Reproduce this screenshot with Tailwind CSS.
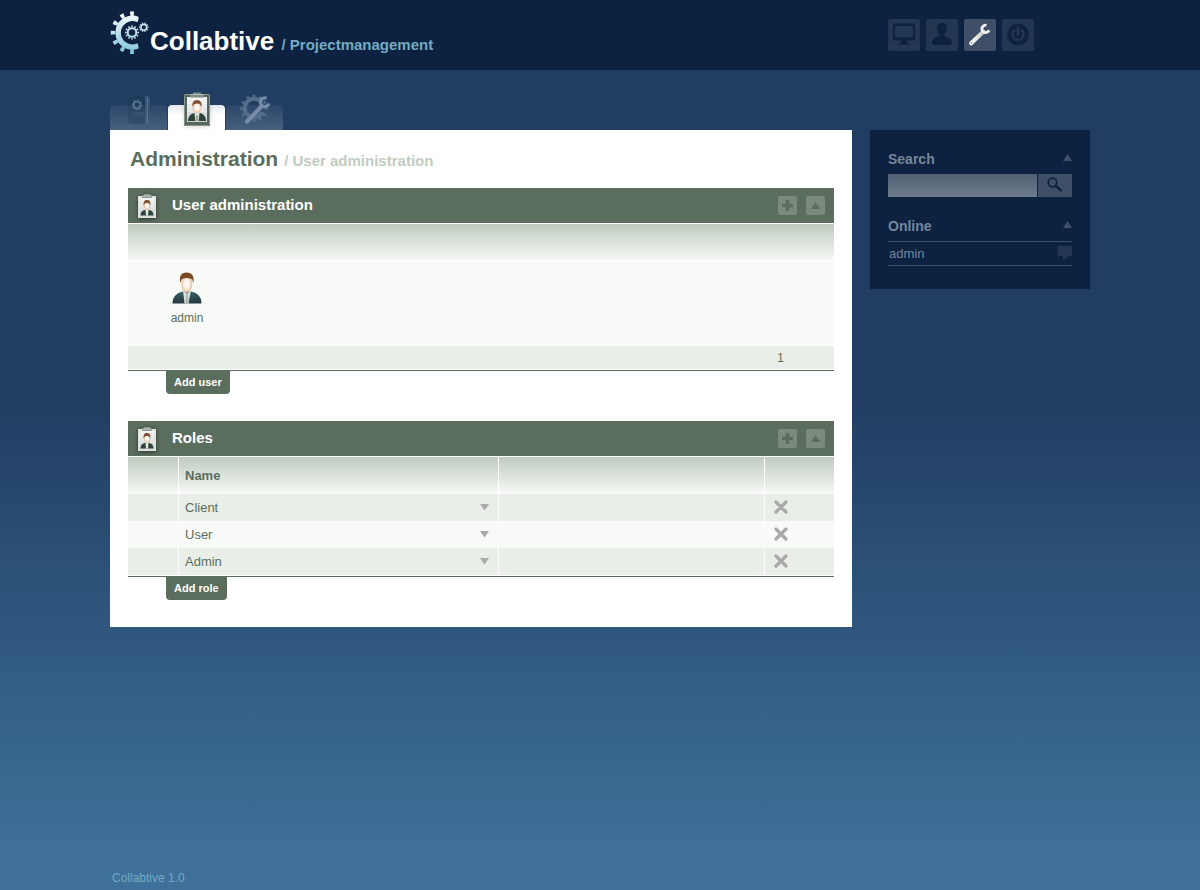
<!DOCTYPE html>
<html lang="en">
<head>
<meta charset="utf-8">
<meta name="viewport" content="width=device-width, initial-scale=1">
<title>Collabtive - User administration</title>
<script src="https://cdn.jsdelivr.net/npm/@tailwindcss/browser@4"></script>
</head>
<body class="flex min-h-screen flex-col bg-linear-to-b from-[#213e62] from-45% to-[#3e7099] to-95% font-['Liberation_Sans',Arial,sans-serif] text-[13px] text-[#5b6d5d]">

<svg class="absolute size-0" aria-hidden="true">
  <defs>
    <linearGradient id="ice" x1="0" y1="0" x2="0" y2="44" gradientUnits="userSpaceOnUse"><stop offset="0" stop-color="#fff"/><stop offset="1" stop-color="#7cc3d9"/></linearGradient>
    <radialGradient id="skin"><stop offset="0" stop-color="#fff"/><stop offset=".5" stop-color="#fbf1e8"/><stop offset="1" stop-color="#e3bd98"/></radialGradient>
    <linearGradient id="suit" x1="0" x2="0" y1="0" y2="1"><stop offset="0" stop-color="#3c6066"/><stop offset="1" stop-color="#22383f"/></linearGradient>
    <linearGradient id="paper" x1="0" x2="0" y1="0" y2="1"><stop offset="0" stop-color="#f4f5f5"/><stop offset="1" stop-color="#cfd3d4"/></linearGradient>
    <linearGradient id="steel" x1="0" x2="1"><stop offset="0" stop-color="#fff"/><stop offset="1" stop-color="#c8c8c8"/></linearGradient>
  </defs>
  <symbol id="clipboard" viewBox="0 0 28 36">
    <rect x="1" y="3" width="26" height="32" rx="1" fill="#56665a"/>
    <rect x="1.500" y="3.500" width="25" height="31" rx="1" fill="none" stroke="#89968c"/>
    <rect x="4" y="6" width="20" height="25" fill="url(#paper)"/>
    <path d="M4 12h20M4 16h20M4 20h20" stroke="#fff" stroke-opacity=".6"/>
    <path d="M5 30c0-4 2-7 6-8h6c4 1 6 4 6 8z" fill="#2f4439"/>
    <path d="M11.500 22h5l-.8 8h-3.400z" fill="#e4e7e4"/>
    <path d="M13 24h2l.6 6h-3.200z" fill="#9aaaa0"/>
    <ellipse cx="14" cy="16.500" rx="4.300" ry="5.800" fill="url(#skin)"/>
    <path d="M9.600 16c-.8-4 .8-7 4.400-7s5.200 3 4.400 7c-.7-2.500-1.800-3.500-4.400-3.500S10.300 13.500 9.600 16z" fill="#80502e"/>
    <path d="M7 3h3V1.500h8V3h3v3.500H7z" fill="#7f8c83"/>
    <path d="M7.500 3.500h13" stroke="#b8c1ba"/>
  </symbol>
  <symbol id="clipboard-light" viewBox="0 0 20 26">
    <rect x="1" y="3" width="18" height="22" fill="#dfe4e0"/>
    <rect x="2.500" y="5" width="15" height="18.500" fill="url(#paper)"/>
    <path d="M3.500 22.500c0-3 1.500-5 4-5.500h5c2.500.5 4 2.500 4 5.500z" fill="#2f4439"/>
    <path d="M8.500 17h3l-.4 5.500H9z" fill="#e4e7e4"/>
    <ellipse cx="10" cy="12.500" rx="3" ry="4.300" fill="url(#skin)"/>
    <path d="M6.700 12.500c-.6-3.500.7-5.500 3.300-5.500s3.900 2 3.300 5.500c-.7-2-1.500-2.500-3.300-2.500s-2.600.5-3.300 2.500z" fill="#80502e"/>
    <path d="M5 2.500h2V1h6v1.500h2V5H5z" fill="#8d9b90"/>
    <path d="M5.500 3h9" stroke="#c5cec7"/>
  </symbol>
  <symbol id="plus" viewBox="0 0 19 19"><path d="M9.500 4v11M4 9.500h11" stroke="#5b6d5d" stroke-width="3.400"/></symbol>
  <symbol id="up" viewBox="0 0 9 7"><path d="M4.500 0L9 7H0z" fill="currentColor"/></symbol>
  <symbol id="down" viewBox="0 0 9 7"><path d="M0 0h9L4.500 6.500z" fill="#a9a9a9"/></symbol>
  <symbol id="cross" viewBox="0 0 14 14"><path d="M2 2l10 10M12 2L2 12" stroke="#a9a9a9" stroke-width="3.200" stroke-linecap="round"/></symbol>
</svg>

<header class="h-[70px] bg-[#0d2240]">
  <div class="mx-auto flex h-full max-w-[980px] items-start justify-between">
    <h1 class="flex pt-[11px] font-bold">
      <svg class="h-11 w-10 shrink-0" viewBox="0 0 40 44" fill="none" stroke="url(#ice)" aria-hidden="true">
        <clipPath id="left"><path d="M0 0h28.500v44H0z"/></clipPath>
        <g clip-path="url(#left)">
          <path d="M28.500 8.800A14.300 14.300 0 1 0 28.500 34.700" stroke-width="5.500"/>
          <circle cx="22" cy="21.700" r="19" stroke-width="4.600" pathLength="120" stroke-dasharray="3.800 6.200" stroke-dashoffset="1.900"/>
        </g>
        <circle cx="22" cy="21.500" r="4.300" stroke-width="2"/>
        <circle cx="22" cy="21.500" r="6.100" stroke-width="1.800" pathLength="120" stroke-dasharray="5 5" stroke-dashoffset="2.500"/>
        <circle cx="33.800" cy="16.300" r="2.900" stroke-width="1.500"/>
        <circle cx="33.800" cy="16.300" r="4.100" stroke-width="1.300" pathLength="100" stroke-dasharray="5 5" stroke-dashoffset="2.500"/>
      </svg>
      <span class="pt-[15px] text-[26px] leading-[30px] text-white">Collabtive <span class="text-[15px] text-[#74abc3]">/ Projectmanagement</span></span>
    </h1>
    <nav class="mr-14 flex gap-1.5 pt-[19px]" aria-label="Main">
      <a href="#" aria-label="Desktop" class="size-8 rounded-xs bg-[#243752]">
        <svg class="size-8" viewBox="0 0 32 32"><path d="M5 4.500h22v17h-8v2l3 2.500H10l3-2.500v-2H5z" fill="#0d2240"/><path d="M7 7h18v11.500H7z" fill="#243752"/></svg></a>
      <a href="#" aria-label="My account" class="size-8 rounded-xs bg-[#243752]">
        <svg class="size-8" viewBox="0 0 32 32"><path d="M16 4c3.200 0 4.800 2.200 4.800 5.300 0 2.400-.9 4.200-2.300 5.700v2c4 1 7.500 3 7.500 7 0 1.500-1.500 2-3 2H9c-1.500 0-3-.5-3-2 0-4 3.500-6 7.500-7v-2c-1.400-1.500-2.300-3.300-2.300-5.700C11.200 6.200 12.800 4 16 4z" fill="#0d2240"/></svg></a>
      <a href="#" aria-label="Administration" class="size-8 rounded-xs bg-[#3e4f67]">
        <svg class="size-8" viewBox="0 0 32 32" fill="none"><path d="M7.200 24.300L19.500 12.500" stroke="url(#steel)" stroke-width="4" stroke-linecap="round"/><path d="M22.500 6.300a3.700 3.700 0 1 0 2.500 5" stroke="#f0f0f0" stroke-width="2.900"/><circle cx="7.500" cy="24" r=".8" fill="#56647a"/></svg></a>
      <a href="#" aria-label="Logout" class="size-8 rounded-xs bg-[#243752]">
        <svg class="size-8" viewBox="0 0 32 32" fill="none"><circle cx="16" cy="15.500" r="10.800" fill="#0d2240"/><path d="M12.300 11.200a5.600 5.600 0 1 0 7.400 0" stroke="#243752" stroke-width="2.400" stroke-linecap="round"/><path d="M16 8.500v7" stroke="#243752" stroke-width="2.600" stroke-linecap="round"/></svg></a>
    </nav>
  </div>
</header>

<div class="mx-auto flex w-full max-w-[980px] items-start gap-[18px]">
  <div class="min-w-0 flex-1">
    <nav class="flex h-[60px] items-end gap-px" aria-label="Administration sections">
      <a href="#" aria-label="Projects" class="flex h-[25px] w-[57px] items-end justify-center rounded-t-sm bg-linear-to-b from-[#2c476a] to-[#48607e]">
        <svg class="mb-1 h-8 w-8 shrink-0" viewBox="0 0 32 32"><path d="M5 4l3-2h16v28H8l-3-2z" fill="#1c3654" fill-opacity=".35"/><path d="M22 2h3l2 3v6l-2 2v17h-3z" fill="#718aa5" fill-opacity=".3"/><path d="M24.500 4v25" stroke="#6f88a3" stroke-opacity=".5"/><circle cx="14" cy="11" r="3.300" fill="none" stroke="#56708f" stroke-width="1.800"/><circle cx="14" cy="11" r="4.700" fill="none" stroke="#56708f" stroke-width="1.400" pathLength="80" stroke-dasharray="5 5"/><path d="M8 19h13M10 21h9" stroke="#3f5b7b"/></svg></a>
      <a href="#" aria-label="Users" aria-current="page" class="flex h-[25px] w-[57px] items-end justify-center rounded-t-sm bg-linear-to-b from-[#e4e7ef] to-white to-40%">
        <svg class="mb-[3px] h-9 w-7 shrink-0 drop-shadow-sm"><use href="#clipboard"/></svg></a>
      <a href="#" aria-label="System" class="flex h-[25px] w-[57px] items-end justify-center rounded-t-sm bg-linear-to-b from-[#2c476a] to-[#48607e]">
        <svg class="mb-1 h-8 w-8 shrink-0" viewBox="0 0 32 32" fill="none"><g stroke="#536d8c"><path d="M22.500 8.500A9.300 9.300 0 1 0 23.500 18" stroke-width="4"/><circle cx="15" cy="14.500" r="12.300" stroke-width="3" pathLength="120" stroke-dasharray="4 6" stroke-dashoffset="2"/></g><path d="M8 27.500L22.500 12.500" stroke="#758ca6" stroke-width="4.200" stroke-linecap="round"/><path d="M27.500 4.300a4.300 4.300 0 1 0 2.400 5" stroke="#758ca6" stroke-width="3.200"/></svg></a>
    </nav>

    <main class="bg-white px-[18px] pb-[27px]">
      <h2 class="flex h-[58px] items-baseline gap-1.5 pt-[17px] pl-0.5 text-[21px] leading-6 font-bold">Administration <span class="text-[15px] text-[#bfccbf]">/ User administration</span></h2>

      <section class="mb-[27px]">
        <header class="mb-px flex h-[35px] items-center bg-[#5b6d5d] px-[9px]">
          <svg class="h-[26px] w-5 drop-shadow-[0_1px_2px_#0008]"><use href="#clipboard-light"/></svg>
          <h3 class="ml-[15px] flex-1 text-[15px] font-bold text-white">User administration</h3>
          <div class="flex gap-[9px]">
            <button aria-label="Add user" class="size-[19px] rounded-xs bg-[#7b8a7d]"><svg class="size-[19px]"><use href="#plus"/></svg></button>
            <button aria-label="Collapse users" class="flex size-[19px] items-center justify-center rounded-xs bg-[#7b8a7d]"><svg class="h-[7px] w-[9px]"><use href="#up"/></svg></button>
          </div>
        </header>
        <div class="h-[37px] bg-linear-to-b from-[#bfcbbf] to-[#f8faf7]"></div>
        <ul class="mt-px flex min-h-[83px] flex-wrap bg-[#f8faf7] pl-[19px]">
          <li><a href="#" class="flex w-20 flex-col items-center gap-1.5 pt-2.5 text-xs">
            <svg class="h-8 w-[30px]" viewBox="0 0 30 32" aria-hidden="true">
              <path d="M.5 31.500C.5 25 4 21 11 19.500h8c7 1.500 10.500 5.500 10.500 12z" fill="url(#suit)"/>
              <path d="M11 18.500l4 3 4-3-2.500 13h-4z" fill="#d9e0dd"/><path d="M14 22h2l1 9.500h-3.500z" fill="#aebcb9"/>
              <ellipse cx="14.800" cy="12" rx="5.500" ry="8.600" fill="url(#skin)"/>
              <path d="M8.300 11C7 4 9 .5 14.500.5S22.500 4 21.400 11l-1.200-3.500C17 5.500 12 5.500 9.500 7.500z" fill="#7a4a26"/>
            </svg>admin</a></li>
        </ul>
        <div class="my-px flex h-[23px] items-center justify-end bg-[#e9eee8] pr-[50px] text-xs">1</div>
        <div class="border-t border-[#5b6d5d] pl-[38px]">
          <button class="block h-[23px] rounded-b-sm bg-[#5b6d5d] px-2 text-[11px] font-bold text-white">Add user</button>
        </div>
      </section>

      <section>
        <header class="mb-px flex h-[35px] items-center bg-[#5b6d5d] px-[9px]">
          <svg class="h-[26px] w-5 drop-shadow-[0_1px_2px_#0008]"><use href="#clipboard-light"/></svg>
          <h3 class="ml-[15px] flex-1 text-[15px] font-bold text-white">Roles</h3>
          <div class="flex gap-[9px]">
            <button aria-label="Add role" class="size-[19px] rounded-xs bg-[#7b8a7d]"><svg class="size-[19px]"><use href="#plus"/></svg></button>
            <button aria-label="Collapse roles" class="flex size-[19px] items-center justify-center rounded-xs bg-[#7b8a7d]"><svg class="h-[7px] w-[9px]"><use href="#up"/></svg></button>
          </div>
        </header>
        <table class="mb-px w-full table-fixed border-separate border-spacing-0 text-left">
          <colgroup><col class="w-[51px]"><col class="w-[320px]"><col><col class="w-[69px]"></colgroup>
          <thead>
            <tr class="h-[37px] bg-linear-to-b from-[#bfcbbf] to-[#f8faf7]">
              <td class="border-r border-white p-0"></td><th scope="col" class="border-r border-white px-1.5 py-0">Name</th><td class="border-r border-white p-0"></td><td class="p-0"></td>
            </tr>
          </thead>
          <tbody>
            <tr class="h-[27px] bg-[#e9eee8]">
              <td class="border-r border-white p-0"></td>
              <td class="border-r border-white p-0"><button class="flex w-full items-center justify-between pr-[9px] pl-1.5">Client<svg class="h-[7px] w-[9px]"><use href="#down"/></svg></button></td>
              <td class="border-r border-white p-0"></td>
              <td class="p-0 pb-px pl-[9px]"><button aria-label="Delete Client" class="block"><svg class="size-3.5"><use href="#cross"/></svg></button></td>
            </tr>
            <tr class="h-[27px] bg-[#f8faf7]">
              <td class="border-r border-white p-0"></td>
              <td class="border-r border-white p-0"><button class="flex w-full items-center justify-between pr-[9px] pl-1.5">User<svg class="h-[7px] w-[9px]"><use href="#down"/></svg></button></td>
              <td class="border-r border-white p-0"></td>
              <td class="p-0 pb-px pl-[9px]"><button aria-label="Delete User" class="block"><svg class="size-3.5"><use href="#cross"/></svg></button></td>
            </tr>
            <tr class="h-[27px] bg-[#e9eee8]">
              <td class="border-r border-white p-0"></td>
              <td class="border-r border-white p-0"><button class="flex w-full items-center justify-between pr-[9px] pl-1.5">Admin<svg class="h-[7px] w-[9px]"><use href="#down"/></svg></button></td>
              <td class="border-r border-white p-0"></td>
              <td class="p-0 pb-px pl-[9px]"><button aria-label="Delete Admin" class="block"><svg class="size-3.5"><use href="#cross"/></svg></button></td>
            </tr>
          </tbody>
        </table>
        <div class="border-t border-[#5b6d5d] pl-[38px]">
          <button class="block h-[23px] rounded-b-sm bg-[#5b6d5d] px-2 text-[11px] font-bold text-white">Add role</button>
        </div>
      </section>
    </main>
  </div>

  <aside class="mt-[60px] w-[220px] shrink-0 bg-[#0d2240] px-[18px] pt-5 pb-[23px] text-[#75869b]">
    <form>
      <div class="flex h-6 items-start justify-between">
        <label for="search" class="text-sm leading-[18px] font-bold">Search</label>
        <button type="button" aria-label="Collapse search" class="mt-1 text-[#3e4f67]"><svg class="h-[7px] w-[9px]"><use href="#up"/></svg></button>
      </div>
      <div class="flex h-[23px] gap-px">
        <input id="search" type="text" class="min-w-0 flex-1 bg-linear-to-b from-[#526074] to-[#6d7b8d] px-1 text-white outline-none">
        <button aria-label="Start search" class="flex w-[34px] justify-center bg-[#3e4f67] pt-[3px]">
          <svg class="size-4" viewBox="0 0 16 16" fill="none" stroke="#0d2240"><circle cx="5.500" cy="5.500" r="4.300" stroke-width="1.800"/><path d="M8.800 8.800L14.500 14" stroke-width="2.500"/></svg></button>
      </div>
    </form>
    <section class="mt-5">
      <div class="flex h-[25px] items-start justify-between border-b border-[#3e4f67]">
        <h3 class="text-sm leading-[18px] font-bold">Online</h3>
        <button aria-label="Collapse online list" class="mt-1 text-[#3e4f67]"><svg class="h-[7px] w-[9px]"><use href="#up"/></svg></button>
      </div>
      <ul><li class="flex h-6 items-center justify-between border-b border-[#3e4f67] pl-px">
        <a href="#">admin</a>
        <button aria-label="Chat with admin"><svg class="h-[15px] w-3.5" viewBox="0 0 14 15"><path d="M0 0h14v10h-3l-6 5v-5H0z" fill="#243752"/></svg></button>
      </li></ul>
    </section>
  </aside>
</div>

<footer class="mx-auto mt-auto w-full max-w-[980px] pt-8 pb-1 pl-0.5 text-xs text-[#74abc3]">Collabtive 1.0</footer>
</body>
</html>
